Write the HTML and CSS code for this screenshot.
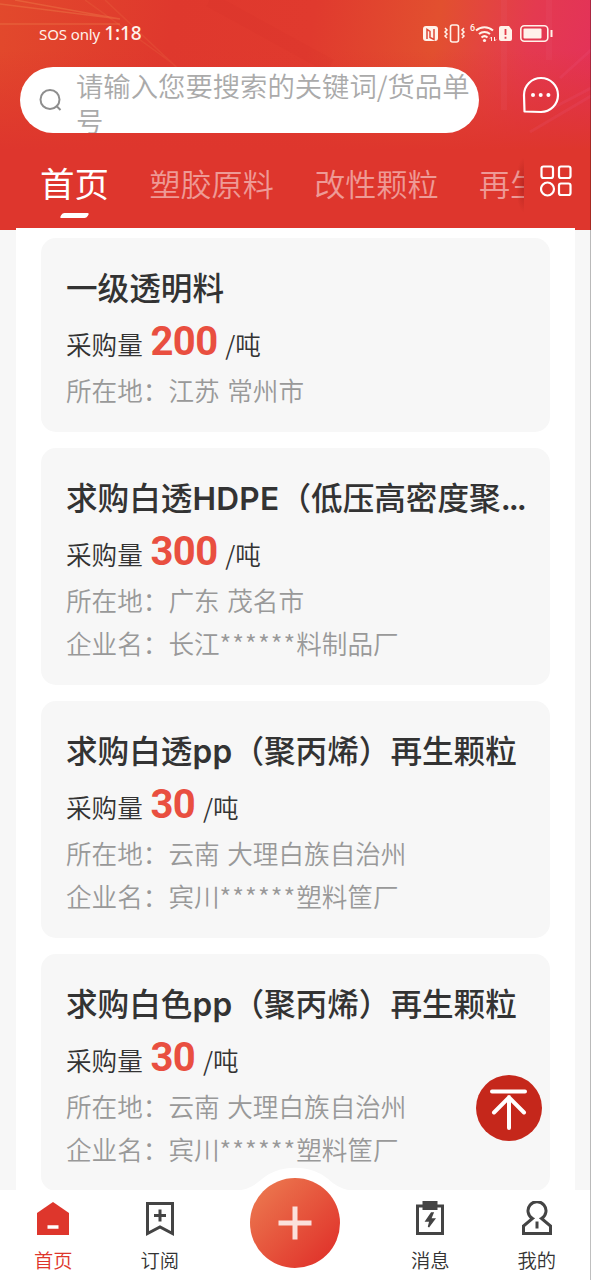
FILE: index.html
```
<!DOCTYPE html>
<html lang="zh-CN">

<head>
    <meta charset="UTF-8">
    <meta name="viewport" content="width=device-width, initial-scale=1.0">
    <title>首页</title>
    <link rel="stylesheet" href="styles.css">
</head>

<body>
    <header class="header">
        <svg class="header-rays" viewBox="0 0 591 150" fill="none">
            <path d="M0 4 120 19M0 24 120 24M15 0 120 19" stroke="#f08a50" stroke-opacity=".35" stroke-width="1.500"/>
            <path d="M85 0 172 63M105 0 190 80" stroke="#f08a50" stroke-opacity=".15" stroke-width="1.500"/>
            <path d="M210 0 330 66" stroke="#c92a24" stroke-opacity=".07" stroke-width="14"/>
            <path d="M591 88 545 112M591 96 530 132M591 50 560 78" stroke="#f06a9a" stroke-opacity=".12" stroke-width="3"/>
            <path d="M504 0v110M549 0v60" stroke="#f06a8a" stroke-opacity=".1" stroke-width="6"/>
        </svg>

        <div class="status-bar">
            <p class="status-left"><span>SOS only</span> <b>1:18</b></p>
            <svg class="status-icons" width="132" height="22" viewBox="0 0 132 22" fill="none">
                <rect x="1" y="4" width="15" height="15" rx="3" fill="#fff2ea"/>
                <path d="M5 17V7.500l3 2v6l4 2V7" stroke="#e04a38" stroke-width="1.500"/>
                <rect x="28.500" y="3" width="8" height="17" rx="2" stroke="#fff2ea" stroke-width="1.600"/>
                <path d="m23 6 2 2-2 2 2 2-2 2 2 2M42 6l-2 2 2 2-2 2 2 2-2 2" stroke="#fff2ea" stroke-width="1.500"/>
                <path d="M54 8.500a12.500 12.500 0 0 1 17 0M57 12a8.500 8.500 0 0 1 11 0" stroke="#fff2ea" stroke-width="2"/>
                <path d="M59.500 15.500a4.500 4.500 0 0 1 6 0" stroke="#fff2ea" stroke-width="2"/>
                <circle cx="62.500" cy="18.500" r="1.600" fill="#fff2ea"/>
                <path d="M69.500 19v-4l-1.500 1.500M72.500 15v4l1.500-1.500" stroke="#fff2ea"/>
                <text x="48" y="9" class="wifi-gen">6</text>
                <path d="M77 6a2 2 0 0 1 2-2h8l3 4v9a2 2 0 0 1-2 2h-9a2 2 0 0 1-2-2z" fill="#fff2ea"/>
                <path d="M83.500 7v6M83.500 14.800v2" stroke="#e23c4a" stroke-width="1.800"/>
                <rect x="98.800" y="3.800" width="27" height="15.400" rx="3.500" stroke="#fff2ea" stroke-width="1.600"/>
                <rect x="101.500" y="6.500" width="18" height="10" rx="1" fill="#fff2ea"/>
                <path d="M129.500 8v7" stroke="#fff2ea" stroke-width="2"/>
            </svg>
        </div>

        <div class="search-row">
            <div class="search-box">
                <svg class="search-icon" width="24" height="24" viewBox="0 0 24 24" fill="none" stroke="#8e8e8e" stroke-width="2">
                    <circle cx="11" cy="11.500" r="9.500"/>
                    <path d="m17 17.500 4.500 4.500"/>
                </svg>
                <p class="search-placeholder">请输入您要搜索的关键词/货品单号</p>
            </div>
            <svg class="chat-icon" width="38" height="38" viewBox="0 0 38 38" fill="none">
                <path d="M2.500 35.500 2 19A17 17 0 1 1 19 36Z" stroke="#fff" stroke-width="2.200" stroke-linejoin="round"/>
                <g fill="#fff">
                    <circle cx="11" cy="19" r="2"/>
                    <circle cx="18.700" cy="19" r="2"/>
                    <circle cx="26.400" cy="19" r="2"/>
                </g>
            </svg>
        </div>

        <nav class="tabs">
            <div class="tab-list">
                <a class="tab active">首页</a>
                <a class="tab">塑胶原料</a>
                <a class="tab">改性颗粒</a>
                <a class="tab">再生颗粒</a>
            </div>
            <svg class="grid-icon" width="32" height="32" viewBox="0 0 32 32" fill="none" stroke="#fff" stroke-width="2.200">
                <rect x="1.500" y="1.500" width="11.500" height="11.500" rx="2"/>
                <rect x="19" y="1.500" width="11.500" height="11.500" rx="2"/>
                <circle cx="7.500" cy="24" r="6.500"/>
                <rect x="19" y="18.500" width="11.500" height="11.500" rx="2"/>
            </svg>
        </nav>
    </header>

    <main class="list">
        <article class="card">
            <h2>一级透明料</h2>
            <p class="amount">采购量 <b>200</b> /吨</p>
            <p class="info">所在地：江苏 常州市</p>
        </article>
        <article class="card">
            <h2>求购白透<span class="latin">HDPE</span>（低压高密度聚<span class="dots">...</span></h2>
            <p class="amount">采购量 <b>300</b> /吨</p>
            <p class="info">所在地：广东 茂名市</p>
            <p class="info">企业名：长江<span class="mask">******</span>料制品厂</p>
        </article>
        <article class="card">
            <h2>求购白透<span class="latin">pp</span>（聚丙烯）再生颗粒</h2>
            <p class="amount">采购量 <b>30</b> /吨</p>
            <p class="info">所在地：云南 大理白族自治州</p>
            <p class="info">企业名：宾川<span class="mask">******</span>塑料筐厂</p>
        </article>
        <article class="card">
            <h2>求购白色<span class="latin">pp</span>（聚丙烯）再生颗粒</h2>
            <p class="amount">采购量 <b>30</b> /吨</p>
            <p class="info">所在地：云南 大理白族自治州</p>
            <p class="info">企业名：宾川<span class="mask">******</span>塑料筐厂</p>
        </article>
    </main>

    <a class="to-top">
        <svg width="66" height="66" viewBox="0 0 66 66" fill="none" stroke="#fff" stroke-width="4" stroke-linecap="round" stroke-linejoin="round">
            <path d="M16 16.500h33M33 53V22M18 37.500 33 22.500l15 15"/>
        </svg>
    </a>

    <footer class="tab-bar">
        <svg class="bump" width="130" height="24" viewBox="0 0 130 24">
            <path d="M0 24C22 24 27 15 36 9 52-2 78-2 94 9c9 6 14 15 36 15z" fill="#fff"/>
        </svg>
        <a class="bar-item active">
            <svg width="34" height="36" viewBox="0 0 34 36">
                <path d="M17 1 33 12v22H1V12z" fill="#de362c"/>
                <path d="M11.500 26h11" stroke="#fff" stroke-width="3.500"/>
            </svg>
            <span>首页</span>
        </a>
        <a class="bar-item">
            <svg width="34" height="36" viewBox="0 0 34 36" fill="none" stroke="#444" stroke-width="3">
                <path d="M4.500 2.500h25v30L17 26 4.500 32.500z"/>
                <path d="M17 8.500v12M11 14.500h12"/>
            </svg>
            <span>订阅</span>
        </a>
        <a class="add-button">
            <svg width="90" height="90" viewBox="0 0 90 90" stroke="#fff" stroke-opacity=".82" stroke-width="5">
                <path d="M28.500 45h33M45 28.500v33"/>
            </svg>
        </a>
        <a class="bar-item">
            <svg width="34" height="36" viewBox="0 0 34 36" fill="none" stroke="#444" stroke-width="3">
                <path d="M4.500 5h25v27.500h-25z"/>
                <path d="M9.500 0h15v9h-15z" fill="#444" stroke="none"/>
                <path d="m18.500 12-5.500 8h4l-1.500 6 6-8h-4l2.500-6z" fill="#444" stroke-width="1.500"/>
            </svg>
            <span>消息</span>
        </a>
        <a class="bar-item">
            <svg width="34" height="36" viewBox="0 0 34 36" fill="none" stroke="#444" stroke-width="3">
                <path d="M12.500 17.500a9 9 0 1 1 9 0l9 7.500v7.500h-27V25z"/>
                <path d="M17 20.500v7"/>
            </svg>
            <span>我的</span>
        </a>
    </footer>
</body>

</html>
```
FILE: styles.css
```
*,
*::after,
*::before {
    box-sizing: border-box;
    padding: 0;
    margin: 0;
}

body {
    position: relative;
    display: flex;
    flex-direction: column;
    height: 1280px;
    overflow: hidden;
    background-color: #f7f7f7;
    font-family: "Noto Sans CJK SC", sans-serif;
    font-weight: 350;
    color: #333;
}

/* thin line on the right edge */
body::after {
    content: "";
    position: absolute;
    top: 0;
    right: 0;
    width: 1px;
    height: 100%;
    background-color: rgba(0, 0, 0, .25);
}

/* Header */
.header {
    position: relative;
    flex: none;
    height: 230px;
    background:
        linear-gradient(to bottom, rgba(222, 54, 45, 0) 50px, #de362d 150px),
        linear-gradient(100deg, #e2492c 0, #df382d 28%, #e03a2e 50%, #e2502f 70%, #e43a50 85%, #e32f5c 100%);
}

.header-rays {
    position: absolute;
    top: 0;
    left: 0;
    width: 591px;
    height: 150px;
}

.status-bar {
    position: relative;
    display: flex;
    justify-content: space-between;
    align-items: center;
    height: 67px;
    padding: 0 37px 1px 39px;
}

.status-left {
    display: flex;
    align-items: baseline;
    gap: 4px;
    color: #fff2ea;
    font-family: "Noto Sans", sans-serif;
    font-size: 15px;
    font-weight: 400;
    letter-spacing: -.1px;
}

.status-left b {
    font-size: 19px;
    font-weight: 500;
}

.wifi-gen {
    fill: #fff2ea;
    font-family: Roboto, sans-serif;
    font-size: 9px;
    font-weight: 500;
}

.search-row {
    position: relative;
    display: flex;
    justify-content: space-between;
    padding: 0 31px 0 20px;
}

.search-box {
    display: flex;
    align-items: center;
    width: 459px;
    height: 66px;
    padding-left: 19px;
    border-radius: 33px;
    background-color: #fff;
    overflow: hidden;
}

.search-icon {
    flex: none;
    margin-right: 13px;
}

.search-placeholder {
    width: 396px;
    padding-top: 5px;
    color: #aaa;
    font-size: 27.35px;
    line-height: 35px;
    word-break: break-all;
}

.chat-icon {
    margin-top: 9px;
}

.tabs {
    display: flex;
    height: 97px;
    padding-left: 40px;
}

.tab-list {
    position: relative;
    display: flex;
    gap: 40.4px;
    width: 484px;
    overflow: hidden;
    white-space: nowrap;
}

.tab-list::after {
    content: "";
    position: absolute;
    top: 24px;
    right: 0;
    width: 8px;
    height: 56px;
    background: radial-gradient(ellipse at right, rgba(130, 20, 15, .4), rgba(130, 20, 15, 0) 70%);
}

.tab {
    flex: none;
    color: rgba(255, 255, 255, .5);
    font-size: 31.1px;
    line-height: 99px;
}

.tab.active {
    display: flex;
    flex-direction: column;
    align-items: center;
    color: #fff;
    font-size: 34.5px;
    font-weight: 400;
}

.tab.active::after {
    content: "";
    width: 27px;
    height: 5px;
    margin-top: -19px;
    border-radius: 2px;
    background-color: #fff;
    transform: skewX(-30deg);
}

.grid-icon {
    margin: 32px 0 0 16px;
}

/* List */
.list {
    display: flex;
    flex-direction: column;
    flex: none;
    gap: 16.5px;
    width: 559px;
    height: 962px;
    margin: -2px 0 0 16px;
    padding: 9.5px 25px 0;
    background-color: #fff;
    position: relative;
}

.card {
    flex: none;
    padding: 26px 24px 20.5px 25px;
    border-radius: 15px;
    background-color: #f7f7f7;
}

.card h2 {
    font-family: Inter, "Noto Sans CJK SC", sans-serif;
    font-size: 31.6px;
    font-weight: 500;
    line-height: 50px;
    white-space: nowrap;
}

.latin {
    font-weight: 600;
    letter-spacing: .3px;
}

.dots {
    font-weight: 600;
    letter-spacing: -2px;
}

.amount {
    height: 55px;
    font-size: 25.6px;
    line-height: 55px;
    word-spacing: 2px;
}

.amount b {
    color: #e94f40;
    font-family: Roboto, sans-serif;
    font-size: 40px;
    font-weight: 700;
    letter-spacing: -.6px;
}

.info {
    color: #999;
    font-size: 25.6px;
    line-height: 42.5px;
    word-spacing: 2px;
}

.mask {
    letter-spacing: 1px;
}

.to-top {
    position: absolute;
    top: 1075px;
    left: 476px;
    width: 66px;
    height: 66px;
    border-radius: 50%;
    background-color: #c5271b;
}

/* Bottom bar */
.tab-bar {
    position: relative;
    display: flex;
    flex: none;
    height: 90px;
    background-color: #fff;
}

.bump {
    position: absolute;
    top: -23px;
    left: 230px;
}

.bar-item {
    display: flex;
    flex-direction: column;
    align-items: center;
    width: 106.5px;
    padding-top: 11px;
    color: #333;
    font-size: 19.3px;
    line-height: 28px;
    gap: 9px;
}

.bar-item.active {
    color: #de362c;
}

.add-button {
    position: relative;
    width: 90px;
    height: 90px;
    margin: -12px 37px 0;
    border-radius: 50%;
    background: linear-gradient(135deg, #ec7a50 5%, #e1372d 85%);
}
```
